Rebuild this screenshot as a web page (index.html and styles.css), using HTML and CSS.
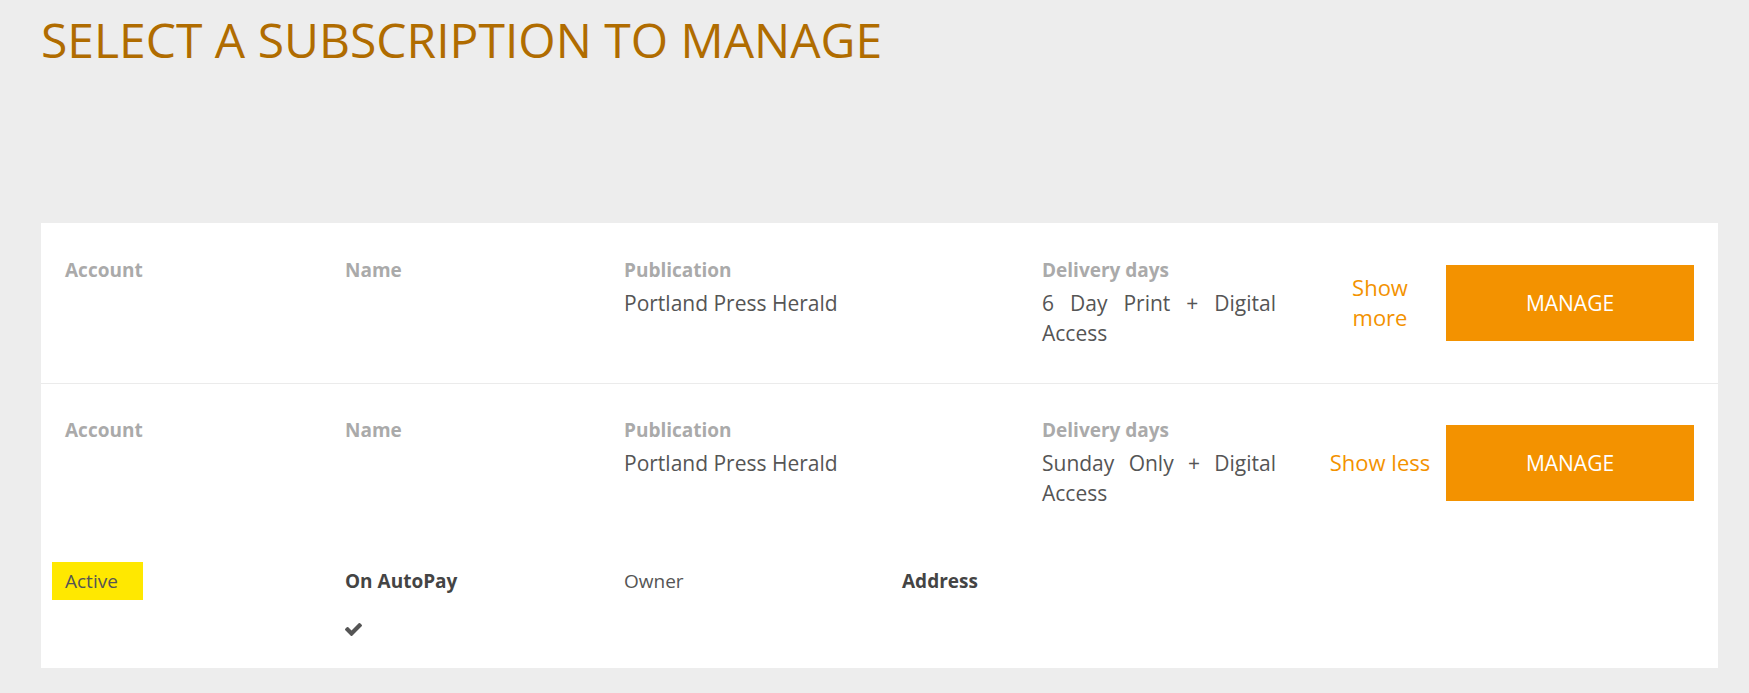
FILE: index.html
```html
<!DOCTYPE html>
<html lang="en">
<head>
<meta charset="utf-8">
<title>Select a subscription to manage</title>
<link rel="stylesheet" href="styles.css">
</head>
<body>
<div class="page">
  <h1 class="title">SELECT A SUBSCRIPTION TO MANAGE</h1>
  <div class="card">
    <div class="sub">
      <div class="sub-main">
        <div class="cell"><div class="label">Account</div></div>
        <div class="cell"><div class="label">Name</div></div>
        <div class="cell"><div class="label">Publication</div><div class="value">Portland Press Herald</div></div>
        <div class="cell delivery"><div class="label">Delivery days</div><div class="value justify">6 Day Print + Digital Access</div></div>
        <div class="toggle">Show more</div>
        <div class="action"><button class="btn">MANAGE</button></div>
      </div>
    </div>
    <div class="sub sub-open">
      <div class="sub-main">
        <div class="cell"><div class="label">Account</div></div>
        <div class="cell"><div class="label">Name</div></div>
        <div class="cell"><div class="label">Publication</div><div class="value">Portland Press Herald</div></div>
        <div class="cell delivery"><div class="label">Delivery days</div><div class="value justify">Sunday Only + Digital Access</div></div>
        <div class="toggle">Show less</div>
        <div class="action"><button class="btn">MANAGE</button></div>
      </div>
      <div class="sub-details">
        <div class="dcell"><span class="status">Active</span></div>
        <div class="dcell">
          <div class="dstrong">On AutoPay</div>
          <div class="check"><svg width="17" height="13" viewBox="121 334 1550 1188"><path fill="#555" d="M1671 566q0 40-28 68l-724 724-136 136q-28 28-68 28t-68-28l-136-136-362-362q-28-28-28-68t28-68l136-136q28-28 68-28t68 28l294 295 656-657q28-28 68-28t68 28l136 136q28 28 28 68z"/></svg></div>
        </div>
        <div class="dcell"><div class="dtext">Owner</div></div>
        <div class="dcell"><div class="dstrong">Address</div></div>
      </div>
    </div>
  </div>
</div>
</body>
</html>
```

FILE: styles.css
```css
html, body {
  margin: 0;
  padding: 0;
  background: #ededed;
}
body {
  font-family: "Open Sans", "Noto Sans", sans-serif;
  color: #555;
}
.page {
  padding: 12px 31px 26px 41px;
}
.title {
  margin: 0;
  font-size: 48px;
  line-height: 56px;
  font-weight: 400;
  color: #b06c00;
}
.card {
  margin-top: 155px;
  background: #fff;
}
.sub {
  padding: 32px 24px 35px 24px;
}
.sub + .sub {
  border-top: 1px solid #ebebeb;
}
.sub-open {
  padding-top: 31px;
  padding-bottom: 32px;
}
.sub-main {
  display: grid;
  grid-template-columns: 280px 279px 418px 283px 110px 1fr;
  align-items: start;
}
.label {
  font-size: 19px;
  line-height: 30px;
  font-weight: 700;
  color: #aaa;
  margin-bottom: 3px;
}
.value {
  font-size: 21px;
  line-height: 30px;
  color: #555;
}
.delivery .value {
  width: 234px;
  text-align: justify;
}
.toggle {
  align-self: center;
  text-align: center;
  font-size: 22px;
  line-height: 30px;
  color: #f39200;
  cursor: pointer;
}
.action {
  align-self: center;
  display: flex;
  justify-content: flex-end;
  padding-top: 3px;
}
.btn {
  width: 248px;
  height: 76px;
  border: 0;
  background: #f39200;
  color: #fff;
  font-family: "Open Sans", "Noto Sans", sans-serif;
  font-size: 21px;
  font-weight: 400;
  cursor: pointer;
}
.sub-details {
  display: grid;
  grid-template-columns: 280px 279px 278px 1fr;
  margin-top: 58px;
  align-items: start;
}
.dcell {
  font-size: 19px;
  line-height: 30px;
  height: 30px;
}
.dcell:nth-child(2) {
  height: auto;
}
.status {
  display: inline-block;
  vertical-align: top;
  margin: -4px 0 0 -13px;
  padding: 4px 25px 4px 13px;
  background: #ffe800;
  color: #555;
}
.dstrong {
  font-weight: 700;
  color: #444;
}
.dtext {
  color: #555;
}
.check {
  margin-top: 27px;
  height: 13px;
  line-height: 0;
}
```
